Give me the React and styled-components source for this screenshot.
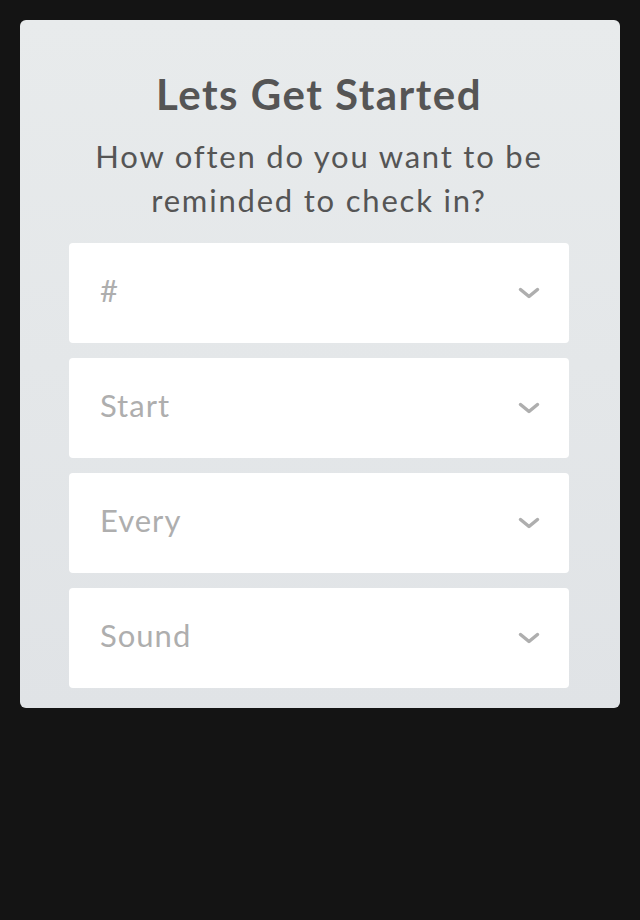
import React from 'react';
import styled, { createGlobalStyle } from 'styled-components';

const GlobalStyle = createGlobalStyle`
  html, body {
    margin: 0;
    padding: 0;
    background: #141414;
    font-family: Lato, "Open Sans", "Liberation Sans", sans-serif;
  }
`;

const Page = styled.div`
  width: 640px;
  height: 920px;
  padding: 20px;
  box-sizing: border-box;
  background: #141414;
`;

const Card = styled.div`
  background: linear-gradient(180deg, #e8ebec 0%, #e0e3e6 100%);
  border-radius: 6px;
  padding: 48px 51px 20px 49px;
  display: flex;
  flex-direction: column;
  align-items: stretch;
`;

const Title = styled.h1`
  margin: 0;
  text-align: center;
  font-size: 42px;
  line-height: 52px;
  font-weight: 700;
  letter-spacing: 1.5px;
  color: #555555;
`;

const Subtitle = styled.p`
  margin: 14px 0 21px;
  text-align: center;
  font-size: 31px;
  line-height: 44px;
  font-weight: 400;
  letter-spacing: 1.8px;
  color: #555555;
`;

const Fields = styled.div`
  display: flex;
  flex-direction: column;
  gap: 15px;
`;

const Select = styled.div`
  height: 100px;
  box-sizing: border-box;
  background: #ffffff;
  border-radius: 4px;
  display: flex;
  align-items: center;
  justify-content: space-between;
  padding: 0 29px 0 31px;
`;

const Placeholder = styled.span`
  font-size: 31px;
  letter-spacing: 1px;
  color: #aeaeae;
  margin-top: -6px;
`;

const Chevron = () => (
  <svg width="22" height="12" viewBox="0 0 22 12">
    <path d="M2.5 2.5 L11 9.5 L19.5 2.5" fill="none" stroke="#aeaeae" strokeWidth="3.5" strokeLinecap="round" strokeLinejoin="round" />
  </svg>
);

const fields = ['#', 'Start', 'Every', 'Sound'];

export default function App() {
  return (
    <Page>
      <GlobalStyle />
      <Card>
        <Title>Lets Get Started</Title>
        <Subtitle>How often do you want to be reminded to check in?</Subtitle>
        <Fields>
          {fields.map(f => (
            <Select key={f}>
              <Placeholder>{f}</Placeholder>
              <Chevron />
            </Select>
          ))}
        </Fields>
      </Card>
    </Page>
  );
}
